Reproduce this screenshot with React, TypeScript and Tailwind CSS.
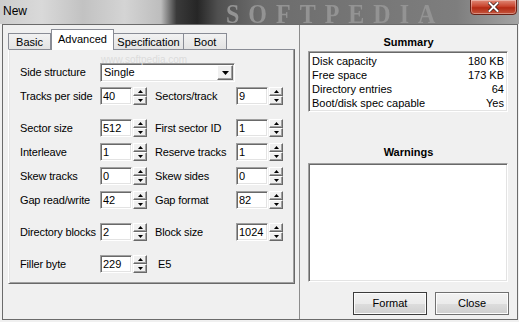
import React from "react";

const sunken =
  "bg-white border border-t-[#a0a0a0] border-l-[#a0a0a0] border-r-white border-b-white shadow-[inset_1px_1px_0_#696969,inset_-1px_-1px_0_#e3e3e3]";
const raised =
  "bg-[#f0f0f0] border border-t-white border-l-white border-r-[#696969] border-b-[#696969] shadow-[inset_-1px_-1px_0_#a0a0a0]";

function Arrow({ up }: { up?: boolean }) {
  return (
    <svg width="5" height="3" viewBox="0 0 5 3">
      <path d={up ? "M2.5 0 L5 3 L0 3 Z" : "M0 0 L5 0 L2.5 3 Z"} fill="#000" />
    </svg>
  );
}

function Spinner() {
  return (
    <div className="ml-[1px] flex h-[18px] w-[14px] flex-col">
      <div className={`flex h-[9px] items-center justify-center ${raised}`}>
        <Arrow up />
      </div>
      <div className={`flex h-[9px] items-center justify-center ${raised}`}>
        <Arrow />
      </div>
    </div>
  );
}

function NumField({ value }: { value: string }) {
  return (
    <div className="flex items-center">
      <div className={`flex h-[18px] w-[32px] items-center pl-[2px] ${sunken}`}>
        {value}
      </div>
      <Spinner />
    </div>
  );
}

type Field = { label: string; value: string };

function Row({
  left,
  right,
  note,
  gap,
}: {
  left: Field;
  right?: Field;
  note?: string;
  gap: string;
}) {
  return (
    <div className={`flex h-[18px] items-center ${gap}`}>
      <div className="w-[80px] tracking-[-0.15px]">{left.label}</div>
      <NumField value={left.value} />
      {right && (
        <>
          <div className="ml-[8px] w-[81px] tracking-[-0.15px]">{right.label}</div>
          <NumField value={right.value} />
        </>
      )}
      {note && <div className="ml-[11px]">{note}</div>}
    </div>
  );
}

const summary = [
  ["Disk capacity", "180 KB"],
  ["Free space", "173 KB"],
  ["Directory entries", "64"],
  ["Boot/disk spec capable", "Yes"],
];

export default function App() {
  return (
    <div className="relative h-[322px] w-[519px] overflow-hidden bg-[#f0f0f0] font-['Liberation_Sans',Arial,sans-serif] text-[11px] leading-[13px] text-black">
      {/* title bar */}
      <div className="relative h-[24px] bg-[linear-gradient(90deg,#cdcdcd_0%,#d9d9d9_8%,#c2c2c2_16%,#d4d4d4_24%,#bdbdbd_31%,#3a3a3a_34%,#262626_38%,#505050_42%,#6c6c6c_50%,#767676_70%,#7e7e7e_88%,#a4a4a4_100%)]">
        <div className="absolute left-[226px] top-0 h-[24px] origin-top scale-y-[1.15] font-['Liberation_Serif',serif] text-[24px] font-bold leading-[24px] tracking-[9px] text-[#939393] blur-[0.6px]">
          SOFTPEDIA
        </div>
        <div className="absolute left-[3px] top-[4px] text-[12px] leading-[14px]">New</div>
        <div className="absolute left-[470px] top-[-1px] flex h-[16px] w-[47px] items-center justify-center rounded-b-[4px] border border-[#6b2015] bg-[linear-gradient(180deg,#e08a78_0%,#c9452f_45%,#b42a14_55%,#c4563e_100%)] shadow-[inset_0_0_0_1px_rgba(255,255,255,0.35)]">
          <svg width="11" height="10" viewBox="0 0 11 10">
            <path d="M1.5 1 L9.5 9 M9.5 1 L1.5 9" stroke="#3a1a14" strokeWidth="3.4" strokeLinecap="square" />
            <path d="M1.5 1 L9.5 9 M9.5 1 L1.5 9" stroke="#fff" strokeWidth="2" strokeLinecap="square" />
          </svg>
        </div>
      </div>

      {/* client area */}
      <div className="ml-[2px] mr-[1px] flex h-[296px] border border-[#6b6b6b]">
        {/* left panel */}
        <div className="relative w-[297px] border-r border-[#8c8c8c] pl-[5px] pt-[4px]">
          <div className="pointer-events-none absolute left-[98px] top-[28px] text-[10px] text-[#dcdcdc]">
            www.softpedia.com
          </div>
          {/* tabs */}
          <div className="relative flex h-[20px] items-end">
            <div className="flex h-[16px] w-[43px] items-center justify-center border border-b-0 border-[#898c95] bg-[linear-gradient(180deg,#f2f2f2,#e3e3e3)] pt-[2px]">
              Basic
            </div>
            <div className="z-10 -mb-[1px] flex h-[21px] w-[63px] items-start justify-center border border-b-0 border-[#898c95] bg-white pt-[3px]">
              Advanced
            </div>
            <div className="flex h-[16px] w-[70px] items-center justify-center border border-b-0 border-l-0 border-[#898c95] bg-[linear-gradient(180deg,#f2f2f2,#e3e3e3)] pt-[2px]">
              Specification
            </div>
            <div className="flex h-[16px] w-[43px] items-center justify-center border border-b-0 border-l-0 border-[#898c95] bg-[linear-gradient(180deg,#f2f2f2,#e3e3e3)] pt-[2px]">
              Boot
            </div>
          </div>
          {/* tab pane */}
          <div className="h-[235px] w-[287px] border border-t-[#898c95] border-l-white border-r-[#696969] border-b-[#696969] bg-[#f0f0f0] pl-[11px] pt-[13px] shadow-[inset_1px_0_0_#e3e3e3,inset_-1px_-1px_0_#a0a0a0]">
            <div className="flex h-[19px] items-center">
              <div className="w-[80px] tracking-[-0.15px]">Side structure</div>
              <div className={`flex h-[19px] w-[135px] items-center justify-between pl-[3px] pr-[1px] ${sunken}`}>
                <span>Single</span>
                <div className={`flex h-[15px] w-[16px] items-center justify-center ${raised}`}>
                  <svg width="7" height="4" viewBox="0 0 7 4">
                    <path d="M0 0 L7 0 L3.5 4 Z" fill="#000" />
                  </svg>
                </div>
              </div>
            </div>
            <Row gap="mt-[5px]" left={{ label: "Tracks per side", value: "40" }} right={{ label: "Sectors/track", value: "9" }} />
            <Row gap="mt-[14px]" left={{ label: "Sector size", value: "512" }} right={{ label: "First sector ID", value: "1" }} />
            <Row gap="mt-[6px]" left={{ label: "Interleave", value: "1" }} right={{ label: "Reserve tracks", value: "1" }} />
            <Row gap="mt-[6px]" left={{ label: "Skew tracks", value: "0" }} right={{ label: "Skew sides", value: "0" }} />
            <Row gap="mt-[6px]" left={{ label: "Gap read/write", value: "42" }} right={{ label: "Gap format", value: "82" }} />
            <Row gap="mt-[14px]" left={{ label: "Directory blocks", value: "2" }} right={{ label: "Block size", value: "1024" }} />
            <Row gap="mt-[14px]" left={{ label: "Filler byte", value: "229" }} note="E5" />
          </div>
        </div>

        {/* right panel */}
        <div className="flex flex-1 flex-col pl-[8px] pr-[8px]">
          <div className="mt-[10px] h-[14px] text-center font-bold leading-[14px]">Summary</div>
          <div className={`mt-[2px] h-[61px] w-[200px] px-[3px] pt-[2px] ${sunken}`}>
            {summary.map(([k, v]) => (
              <div key={k} className="flex h-[14px] items-center justify-between">
                <span>{k}</span>
                <span>{v}</span>
              </div>
            ))}
          </div>
          <div className="mt-[33px] h-[14px] text-center font-bold leading-[14px]">Warnings</div>
          <div className={`mt-[4px] h-[119px] w-[200px] ${sunken}`} />
          <div className="mt-[10px] flex justify-end gap-[8px]">
            <div className="flex h-[23px] w-[74px] items-center justify-center border border-[#3c3c3c] bg-[linear-gradient(180deg,#f2f2f2,#ebebeb_50%,#dddddd_51%,#cfcfcf)] shadow-[inset_0_0_0_1px_#fcfcfc]">
              Format
            </div>
            <div className="flex h-[23px] w-[74px] items-center justify-center border border-[#707070] bg-[linear-gradient(180deg,#f2f2f2,#ebebeb_50%,#dddddd_51%,#cfcfcf)] shadow-[inset_0_0_0_1px_#fcfcfc]">
              Close
            </div>
          </div>
        </div>
      </div>
    </div>
  );
}
